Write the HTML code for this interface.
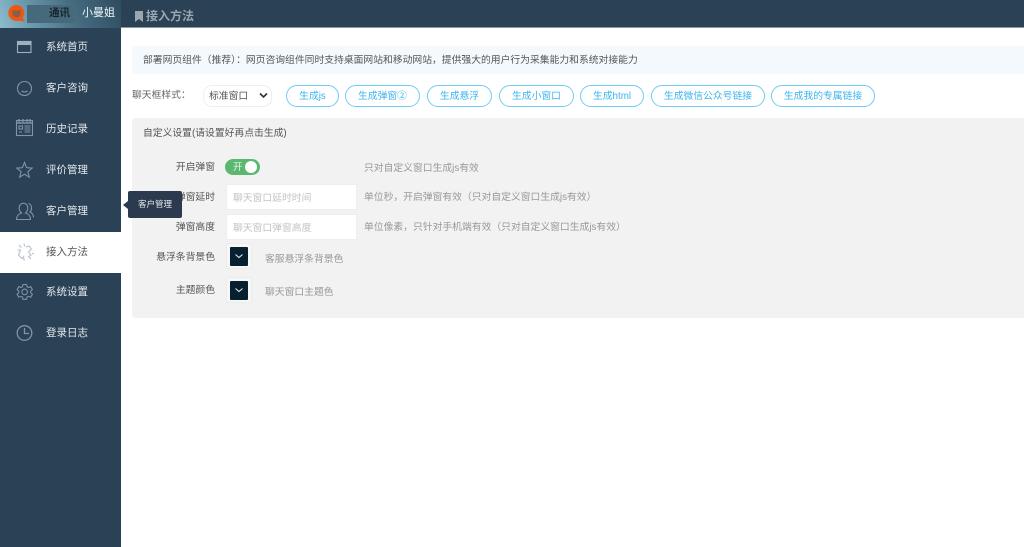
<!DOCTYPE html>
<html lang="zh-CN">
<head>
<meta charset="utf-8">
<title>接入方法</title>
<style>
*{box-sizing:border-box;margin:0;padding:0}
html,body{width:1024px;height:547px;overflow:hidden;background:#fff}
#root{position:absolute;left:0;top:0;width:1024px;height:547px;overflow:hidden;background:#fff;filter:blur(.35px)}
body{font-family:"Liberation Sans","Noto Sans CJK SC",sans-serif;font-size:9.8px;color:#555}
.a{position:absolute;white-space:nowrap}
#side{position:absolute;left:0;top:0;width:121px;height:547px;background:#2a4156}
#logo{position:absolute;left:0;top:0;width:121px;height:28px;background:linear-gradient(68deg,#8fbdd0 0%,#6f9db1 22%,#456b7e 62%,#2f4c60 100%)}
#head{position:absolute;left:121px;top:0;width:903px;height:28px;background:#2a4156;border-bottom:1px solid #8b97a1}
.m{position:absolute;left:46px;color:#e4e9ed;font-size:10.5px;line-height:14px;height:14px}
.ic{position:absolute;left:14px;width:22px;height:22px;fill:none;stroke:#7f94a8;stroke-width:1.1}
#act{position:absolute;left:0;top:232px;width:121px;height:41px;background:#fff}
.btn{position:absolute;top:85px;height:22px;border:1px solid #6fcbf7;border-radius:11px;color:#3cb4ee;text-align:center;line-height:22px;background:#fff;white-space:nowrap}
.lab{position:absolute;right:809px;color:#555;line-height:14px;white-space:nowrap}
.inp{position:absolute;left:226px;width:131px;height:26px;background:#fff;border:1px solid #eee;color:#c3c3c3;line-height:27px;padding-left:6px;white-space:nowrap}
.tip{position:absolute;left:364px;color:#999;line-height:14px;white-space:nowrap}
.cp{position:absolute;left:226px;width:26px;height:26px;background:#f6f6f6;border:1px solid #ececec;border-radius:2px}
.cp i{position:absolute;left:3px;top:3px;width:18px;height:19px;background:#07202f;border-radius:1px}
.cp svg{position:absolute;left:3px;top:3px;width:18px;height:18px}
</style>
</head>
<body>
<div id="root">
<div id="side"></div>
<div id="logo"></div>
<div class="a" style="left:27px;top:5px;width:48px;height:18px;background:#46697c"></div>
<svg class="a" style="left:7px;top:4px;width:20px;height:18px" viewBox="0 0 20 18"><path d="M9.500 1a8 8 0 1 0 2 15.700l6.500 .8-2.500-3.700A8 8 0 0 0 9.500 1z" fill="#f0560f"/><path d="M5.500 5.500l1.500 1h5l1.500-1v5a3.500 3.500 0 0 1-3.500 2.800H9a3.500 3.500 0 0 1-3.500-2.800z" fill="#8a5f48"/></svg>
<div class="a" style="left:49px;top:6px;font-size:10.500px;line-height:14px;color:#16242e;font-weight:bold">通讯</div>
<div class="a" style="left:82px;top:6px;font-size:11px;line-height:14px;color:#eef3f6">小曼姐</div>

<div id="head"></div>
<svg class="a" style="left:135px;top:11px;width:8px;height:11px" viewBox="0 0 8 11"><path d="M0 0h8v11L4 8 0 11z" fill="#9aa6b0"/></svg>
<div class="a" style="left:146px;top:8px;font-size:12px;line-height:16px;font-weight:bold;color:#9aa6b0">接入方法</div>

<div id="act"></div>

<svg class="ic" style="top:36px" viewBox="0 0 22 22"><rect x="3.500" y="5.500" width="13.500" height="11" stroke="#9db0bf"/><rect x="3.500" y="5.500" width="13.500" height="3" fill="#9db0bf" stroke="#9db0bf"/></svg>
<div class="m" style="top:40px">系统首页</div>

<svg class="ic" style="top:77px" viewBox="0 0 22 22"><circle cx="10.500" cy="11.500" r="7"/><path d="M7.500 14q3 2 6 0"/></svg>
<div class="m" style="top:81px">客户咨询</div>

<svg class="ic" style="top:117px" viewBox="0 0 22 22"><rect x="2.500" y="3.500" width="16" height="15"/><path d="M5 2v3M9 2v3M13 2v3M16 2v3M2.500 6h16" stroke-width="1.400"/><rect x="5" y="9" width="3.500" height="3"/><path d="M10.500 9h6M10.500 11h6M10.500 13h6M10.500 15h6M5 15h3"/></svg>
<div class="m" style="top:122px">历史记录</div>

<svg class="ic" style="top:159px" viewBox="0 0 22 22"><path d="M10.500 3.500l2.100 5.200 5.600.4-4.300 3.600 1.400 5.500-4.800-3-4.800 3 1.400-5.500L2.800 9.100l5.600-.4z"/></svg>
<div class="m" style="top:163px">评价管理</div>

<svg class="ic" style="top:200px" viewBox="0 0 22 22"><path d="M2.500 19.500c0-4 2-5.500 5-6.500-1.600-1.400-2.300-3-2.300-5 0-3 1.900-4.800 4.300-4.800s4.300 1.800 4.300 4.800c0 2-.7 3.600-2.300 5 3 1 5 2.500 5 6.500z"/><path d="M14.500 3.500c2 .5 3 2.200 3 4.500 0 1.500-.5 3-1.500 4 2.200 1 3.500 2.500 3.500 5.500"/></svg>
<div class="m" style="top:204px">客户管理</div>

<svg class="ic" style="top:241px;stroke:#c0cad3" viewBox="0 0 22 22"><path d="M5 4l2.500 2.500M10 2.500l.8 3M3.500 9h3L4.500 14l3.500 3.500 2-2.500M12 6l3-1 2.500 3-3 3 2.500 3-3 2M9.500 16.500l.8 3M15 16l2 2M18 12.500h2" stroke-width="1.300"/></svg>
<div class="m" style="top:245px;color:#555">接入方法</div>

<svg class="ic" style="top:281px" viewBox="0 0 22 22"><path d="M9 3.500h3.500l.5 2.200 1.600.8 2.100-.9 1.700 3-1.700 1.400v1.800l1.700 1.400-1.700 3-2.100-.9-1.600.8-.5 2.200H9l-.5-2.200-1.600-.8-2.100.9-1.700-3 1.700-1.400V10L3.100 8.600l1.700-3 2.100.9 1.600-.8z"/><circle cx="10.700" cy="10.900" r="2.800"/></svg>
<div class="m" style="top:285px">系统设置</div>

<svg class="ic" style="top:322px" viewBox="0 0 22 22"><circle cx="10.500" cy="11" r="7.300" stroke-width="1.300"/><path d="M10.500 6v5.500h4.500" stroke-width="1.300"/></svg>
<div class="m" style="top:326px">登录日志</div>

<div class="a" style="left:132px;top:46px;width:892px;height:28px;background:#f4f9fd;border-radius:4px 0 0 4px"></div>
<div class="a" style="left:143px;top:54px;line-height:14px;color:#555">部署网页组件（推荐）：网页咨询组件同时支持桌面网站和移动网站，提供强大的用户行为采集能力和系统对接能力</div>

<div class="a" style="left:132px;top:89px;line-height:14px;color:#666">聊天框样式：</div>
<div class="a" style="left:203px;top:85px;width:69px;height:22px;border:1px solid #eee;border-radius:9px;background:#fff;line-height:22px;padding-left:5px;color:#555">标准窗口</div>
<svg class="a" style="left:259px;top:92px;width:9px;height:7px" viewBox="0 0 9 7"><path d="M1 1.500l3.500 3.500L8 1.500" fill="none" stroke="#333" stroke-width="1.600"/></svg>
<div class="btn" style="left:286px;width:53px">生成js</div>
<div class="btn" style="left:345px;width:75px">生成弹窗②</div>
<div class="btn" style="left:427px;width:65px">生成悬浮</div>
<div class="btn" style="left:499px;width:75px">生成小窗口</div>
<div class="btn" style="left:580px;width:64px">生成html</div>
<div class="btn" style="left:651px;width:114px">生成微信公众号链接</div>
<div class="btn" style="left:771px;width:104px">生成我的专属链接</div>

<div class="a" style="left:132px;top:118px;width:892px;height:200px;background:#f2f2f2;border-radius:3px 0 0 3px"></div>
<div class="a" style="left:143px;top:127px;line-height:14px;color:#555">自定义设置(请设置好再点击生成)</div>

<div class="lab" style="top:161px">开启弹窗</div>
<div class="a" style="left:225px;top:159px;width:35px;height:16px;background:#5cb870;border-radius:8px"></div>
<div class="a" style="left:233px;top:161px;font-size:9.500px;line-height:14px;color:#e8f6ea">开</div>
<div class="a" style="left:245px;top:161px;width:12px;height:12px;background:#fff;border-radius:50%"></div>
<div class="tip" style="top:162px">只对自定义窗口生成js有效</div>

<div class="lab" style="top:191px">弹窗延时</div>
<div class="inp" style="top:184px">聊天窗口延时时间</div>
<div class="tip" style="top:191px">单位秒，开启弹窗有效（只对自定义窗口生成js有效）</div>

<div class="lab" style="top:221px">弹窗高度</div>
<div class="inp" style="top:214px">聊天窗口弹窗高度</div>
<div class="tip" style="top:221px">单位像素，只针对手机端有效（只对自定义窗口生成js有效）</div>

<div class="lab" style="top:251px">悬浮条背景色</div>
<div class="cp" style="top:243px"><i></i><svg viewBox="0 0 18 18"><path d="M5.500 7.500l3.500 3 3.500-3" fill="none" stroke="#dfe8ee" stroke-width="1.100"/></svg></div>
<div class="tip" style="left:265px;top:253px">客服悬浮条背景色</div>

<div class="lab" style="top:284px">主题颜色</div>
<div class="cp" style="top:277px"><i></i><svg viewBox="0 0 18 18"><path d="M5.500 7.500l3.500 3 3.500-3" fill="none" stroke="#dfe8ee" stroke-width="1.100"/></svg></div>
<div class="tip" style="left:265px;top:286px">聊天窗口主题色</div>

<div class="a" style="left:128px;top:191px;width:54px;height:27px;background:#2b3a4e;border-radius:2px;color:#e6eaee;font-size:8.500px;line-height:27px;text-align:center">客户管理</div>
<div class="a" style="left:123px;top:201px;width:0;height:0;border-top:4px solid transparent;border-bottom:4px solid transparent;border-right:5px solid #2b3a4e"></div>
</div>
</body>
</html>
